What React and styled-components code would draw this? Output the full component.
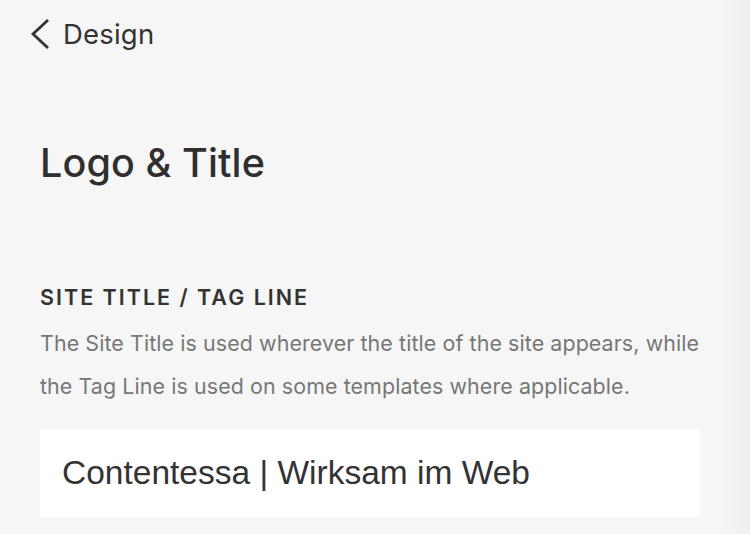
import React from "react"
import styled, { createGlobalStyle } from "styled-components"

const GlobalStyle = createGlobalStyle`
  html, body {
    margin: 0;
    padding: 0;
    background: #f6f6f6;
  }
  body {
    font-family: Inter, "Noto Sans", sans-serif;
    -webkit-font-smoothing: antialiased;
  }
`

const Panel = styled.div`
  position: relative;
  width: 750px;
  height: 534px;
  overflow: hidden;
  background: #f6f6f6;
  box-sizing: border-box;

  /* soft shadow of the neighbouring pane on the right */
  &::after {
    content: "";
    position: absolute;
    top: 0;
    right: 0;
    bottom: 0;
    width: 30px;
    background: linear-gradient(to right, rgba(0, 0, 0, 0), rgba(0, 0, 0, 0.03));
    pointer-events: none;
  }
`

const BackBar = styled.div`
  display: flex;
  align-items: center;
  gap: 12px;
  height: 68px;
  padding-left: 27px;
  color: #333;
  font-size: 27.5px;
  font-weight: 400;
  letter-spacing: 0.2px;
`

const Content = styled.div`
  display: flex;
  flex-direction: column;
  padding: 0 50px 0 40px;
`

const PageTitle = styled.h1`
  margin: 68px 0 0;
  font-size: 39.5px;
  font-weight: 500;
  line-height: 54px;
  letter-spacing: 0.1px;
  color: #2f2f2f;
`

const SectionLabel = styled.h2`
  margin: 92px 0 0;
  font-size: 21.5px;
  font-weight: 600;
  letter-spacing: 2px;
  line-height: 30px;
  color: #333;
  text-transform: uppercase;
`

const Help = styled.p`
  margin: 10px -20px 0 0;
  font-size: 21.4px;
  line-height: 43px;
  color: #777;
  letter-spacing: 0.1px;
`

const TextField = styled.div`
  display: flex;
  align-items: center;
  height: 88px;
  margin-top: 21px;
  padding: 0 22px;
  background: #fff;
  font-family: "Liberation Sans", Arial, sans-serif;
  font-size: 33.5px;
  color: #333;
`

const Chevron = () => (
  <svg width="24" height="30" viewBox="0 0 24 30" fill="none">
    <path d="M20 2 L6 15 L20 28" stroke="#333" strokeWidth="2.8" strokeLinecap="square" />
  </svg>
)

export default function App() {
  return (
    <Panel>
      <GlobalStyle />
      <BackBar>
        <Chevron />
        <span>Design</span>
      </BackBar>
      <Content>
        <PageTitle>Logo &amp; Title</PageTitle>
        <SectionLabel>Site Title / Tag Line</SectionLabel>
        <Help>
          The Site Title is used wherever the title of the site appears, while the Tag Line is used on some templates where applicable.
        </Help>
        <TextField>Contentessa | Wirksam im Web</TextField>
      </Content>
    </Panel>
  )
}
